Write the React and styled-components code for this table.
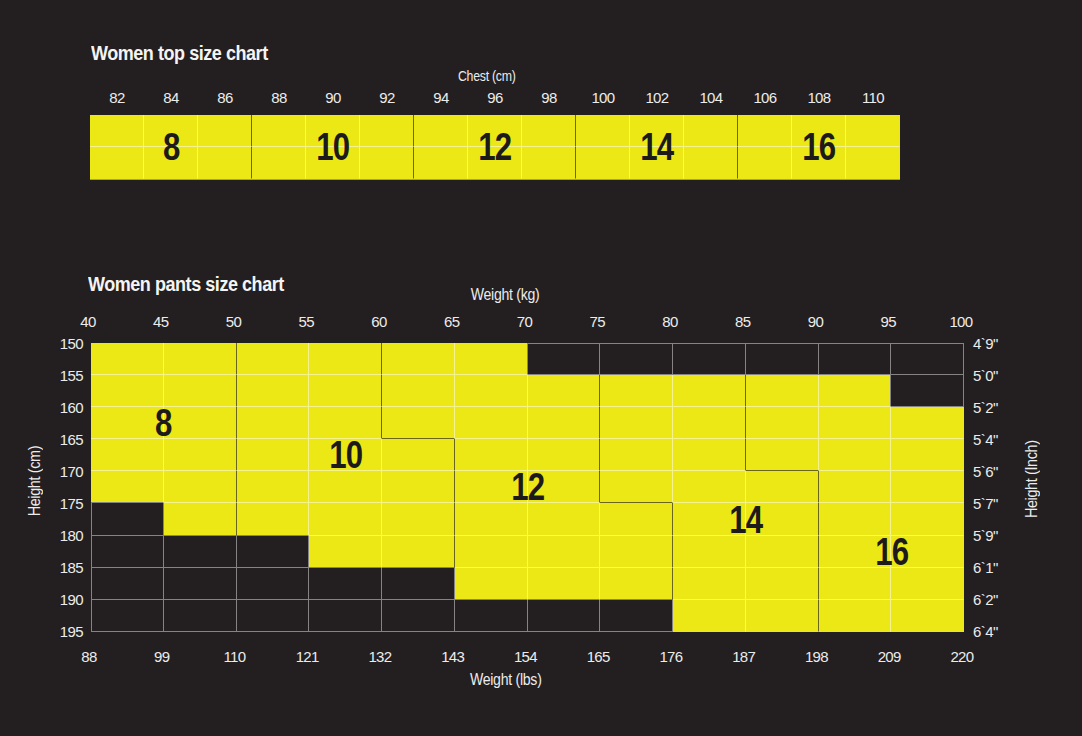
import React from 'react';
import styled, { createGlobalStyle } from 'styled-components';

const YELLOW = '#ebe815';
const DARK = '#231f20';
const GRID_GRAY = '#858384';
const LIGHT_LINE = '#f6f38c';
const SIZE_LINE = '#6a6620';

const COL_W = 72.75;
const ROW_H = 32.1;

// chest chart
const chest = [82, 84, 86, 88, 90, 92, 94, 96, 98, 100, 102, 104, 106, 108, 110];
const topSizes = [8, 10, 12, 14, 16];

// pants chart: 0 = no size, else the size that covers the cell
const pants = [
  [8, 8, 10, 10, 12, 12, 0, 0, 0, 0, 0, 0],
  [8, 8, 10, 10, 12, 12, 12, 14, 14, 16, 16, 0],
  [8, 8, 10, 10, 12, 12, 12, 14, 14, 16, 16, 16],
  [8, 8, 10, 10, 10, 12, 12, 14, 14, 16, 16, 16],
  [8, 8, 10, 10, 10, 12, 12, 14, 14, 14, 16, 16],
  [0, 8, 10, 10, 10, 12, 12, 12, 14, 14, 16, 16],
  [0, 0, 0, 10, 10, 12, 12, 12, 14, 14, 16, 16],
  [0, 0, 0, 0, 0, 12, 12, 12, 14, 14, 16, 16],
  [0, 0, 0, 0, 0, 0, 0, 0, 14, 14, 16, 16],
];

// where each size number sits in the pants grid (1-based grid lines)
const pantsLabels = [
  { size: 8, col: '1 / 3', row: '3 / 4' },
  { size: 10, col: '4 / 5', row: '4 / 5' },
  { size: 12, col: '6 / 8', row: '5 / 6' },
  { size: 14, col: '9 / 11', row: '6 / 7' },
  { size: 16, col: '11 / 13', row: '7 / 8' },
];

const kg = [40, 45, 50, 55, 60, 65, 70, 75, 80, 85, 90, 95, 100];
const lbs = [88, 99, 110, 121, 132, 143, 154, 165, 176, 187, 198, 209, 220];
const cm = [150, 155, 160, 165, 170, 175, 180, 185, 190, 195];
const inch = ['4`9"', '5`0"', '5`2"', '5`4"', '5`6"', '5`7"', '5`9"', '6`1"', '6`2"', '6`4"'];

const lineBetween = (a, b) => {
  if (a === 0 || b === 0) return GRID_GRAY;
  if (a !== b) return SIZE_LINE;
  return LIGHT_LINE;
};

const GlobalStyle = createGlobalStyle`
  html, body {
    margin: 0;
    background: ${DARK};
  }
  body {
    font-family: "Liberation Sans Narrow", "Liberation Sans", Arial, sans-serif;
    color: #ececec;
  }
`;

const Page = styled.div`
  width: 1082px;
  height: 736px;
  overflow: hidden;
  padding-top: 42px;
  box-sizing: border-box;
`;

// no narrow face installed, so squeeze the regular one
const Narrow = styled.span`
  display: inline-block;
  transform: scaleX(${p => p.$x || 0.88});
  transform-origin: ${p => p.$origin || 'center'};
  white-space: nowrap;
`;

const Title = styled.div`
  font-size: 20px;
  font-weight: bold;
  line-height: 22px;
  letter-spacing: -0.5px;
  color: #f4f4f4;
  margin-left: ${p => p.$indent}px;
`;

const TopSection = styled.section`
  margin-left: 90px;
  width: 811px;
`;

const AxisCaption = styled.div`
  font-size: ${p => p.$size || 16}px;
  line-height: 20px;
  text-align: center;
  letter-spacing: -0.3px;
  width: ${p => p.$width}px;
  margin-top: ${p => p.$top || 0}px;
`;

const TickRow = styled.div`
  display: grid;
  grid-template-columns: repeat(${p => p.$count}, ${p => p.$col}px);
  margin-left: ${p => p.$indent || 0}px;
  margin-top: ${p => p.$top || 0}px;
  font-size: 15px;
  line-height: 20px;
  text-align: center;
  letter-spacing: -0.6px;
`;

const Bar = styled.div`
  display: grid;
  grid-template-columns: repeat(15, 54px);
  grid-template-rows: 32px 32px;
  margin-top: 7px;
  border-bottom: 1px solid #a8a53c;
  width: 810px;
`;

const BarCell = styled.div`
  background: ${YELLOW};
  border-right: 1px solid ${p => (p.$edge ? SIZE_LINE : p.$last ? 'transparent' : LIGHT_LINE)};
  border-bottom: 1px solid ${p => (p.$top ? LIGHT_LINE : 'transparent')};
  box-sizing: border-box;
  grid-column: ${p => p.$c + 1};
  grid-row: ${p => p.$r + 1};
`;

const SizeNumber = styled.div`
  grid-column: ${p => p.$col};
  grid-row: ${p => p.$row};
  display: flex;
  align-items: center;
  justify-content: center;
  font-size: 39px;
  font-weight: bold;
  color: #1d1a1b;
  letter-spacing: -1px;
  z-index: 1;
`;

const PantsSection = styled.section`
  margin-top: 93px;
`;

const ChartRow = styled.div`
  display: flex;
  align-items: stretch;
  margin-top: 11px;
`;

const SideTitle = styled.div`
  flex: 0 0 ${p => p.$width}px;
  display: flex;
  align-items: center;
  justify-content: center;
  padding: ${p => p.$pad};
  box-sizing: border-box;
  & > span {
    writing-mode: vertical-rl;
    transform: rotate(180deg) scaleY(0.9);
    font-size: 16px;
    letter-spacing: -0.4px;
    white-space: nowrap;
  }
`;

const SideTicks = styled.div`
  flex: 0 0 ${p => p.$width}px;
  display: grid;
  grid-template-rows: repeat(10, ${ROW_H}px);
  margin: -${ROW_H / 2}px ${p => p.$right || 0}px -${ROW_H / 2}px ${p => p.$left || 0}px;
  font-size: 15px;
  letter-spacing: -0.6px;
  & span {
    display: flex;
    align-items: center;
    justify-content: ${p => (p.$align === 'right' ? 'flex-end' : 'flex-start')};
    white-space: nowrap;
  }
`;

const PantsGrid = styled.div`
  display: grid;
  grid-template-columns: repeat(12, ${COL_W}px);
  grid-template-rows: repeat(9, ${ROW_H}px);
  flex: 0 0 auto;
`;

const PantsCell = styled.div`
  grid-column: ${p => p.$c + 1};
  grid-row: ${p => p.$r + 1};
  box-sizing: border-box;
  background: ${p => (p.$dark ? DARK : YELLOW)};
  border-right: 1px solid ${p => p.$right};
  border-bottom: 1px solid ${p => p.$bottom};
  border-left: ${p => (p.$left ? `1px solid ${p.$left}` : 'none')};
  border-top: ${p => (p.$top ? `1px solid ${p.$top}` : 'none')};
`;

const TopChart = () => (
  <TopSection>
    <Title $indent={1}>
      <Narrow $x={0.9} $origin="left">Women top size chart</Narrow>
    </Title>
    <AxisCaption $size={14} $width={794} $top={2}>
      <Narrow>Chest (cm)</Narrow>
    </AxisCaption>
    <TickRow $count={15} $col={54} $top={2}>
      {chest.map(v => <span key={v}>{v}</span>)}
    </TickRow>
    <Bar>
      {[0, 1].map(r =>
        chest.map((v, c) => (
          <BarCell
            key={`${r}-${c}`}
            $r={r}
            $c={c}
            $top={r === 0}
            $edge={c % 3 === 2 && c < 14}
            $last={c === 14}
          />
        ))
      )}
      {topSizes.map((s, i) => (
        <SizeNumber key={s} $col={`${i * 3 + 1} / ${i * 3 + 4}`} $row="1 / 3">
          <Narrow $x={0.8}>{s}</Narrow>
        </SizeNumber>
      ))}
    </Bar>
  </TopSection>
);

const PantsChart = () => (
  <PantsSection>
    <Title $indent={88}>
      <Narrow $x={0.9} $origin="left">Women pants size chart</Narrow>
    </Title>
    <AxisCaption $width={1010} $top={-10}>
      <Narrow>Weight (kg)</Narrow>
    </AxisCaption>
    <TickRow $count={13} $col={COL_W} $indent={88 - COL_W / 2} $top={7}>
      {kg.map(v => <span key={v}>{v}</span>)}
    </TickRow>
    <ChartRow>
      <SideTitle $width={50} $pad="0 0 12px 20px">
        <span>Height (cm)</span>
      </SideTitle>
      <SideTicks $width={33} $align="right" $right={8}>
        {cm.map(v => <span key={v}>{v}</span>)}
      </SideTicks>
      <PantsGrid>
        {pants.map((row, r) =>
          row.map((v, c) => {
            const right = c < 11 ? lineBetween(v, row[c + 1]) : v === 0 ? GRID_GRAY : 'transparent';
            const bottom = r < 8 ? lineBetween(v, pants[r + 1][c]) : v === 0 ? GRID_GRAY : 'transparent';
            return (
              <PantsCell
                key={`${r}-${c}`}
                $r={r}
                $c={c}
                $dark={v === 0}
                $right={right}
                $bottom={bottom}
                $left={c === 0 && v === 0 ? GRID_GRAY : null}
                $top={r === 0 && v === 0 ? GRID_GRAY : null}
              />
            );
          })
        )}
        {pantsLabels.map(l => (
          <SizeNumber key={l.size} $col={l.col} $row={l.row}>
            <Narrow $x={0.8}>{l.size}</Narrow>
          </SizeNumber>
        ))}
      </PantsGrid>
      <SideTicks $width={40} $align="left" $left={9}>
        {inch.map(v => <span key={v}>{v}</span>)}
      </SideTicks>
      <SideTitle $width={38} $pad="0 0 16px 0">
        <span>Height (Inch)</span>
      </SideTitle>
    </ChartRow>
    <TickRow $count={13} $col={COL_W} $indent={89 - COL_W / 2} $top={15}>
      {lbs.map(v => <span key={v}>{v}</span>)}
    </TickRow>
    <AxisCaption $width={1012} $top={3}>
      <Narrow>Weight (lbs)</Narrow>
    </AxisCaption>
  </PantsSection>
);

export default function App() {
  return (
    <>
      <GlobalStyle />
      <Page>
        <TopChart />
        <PantsChart />
      </Page>
    </>
  );
}
